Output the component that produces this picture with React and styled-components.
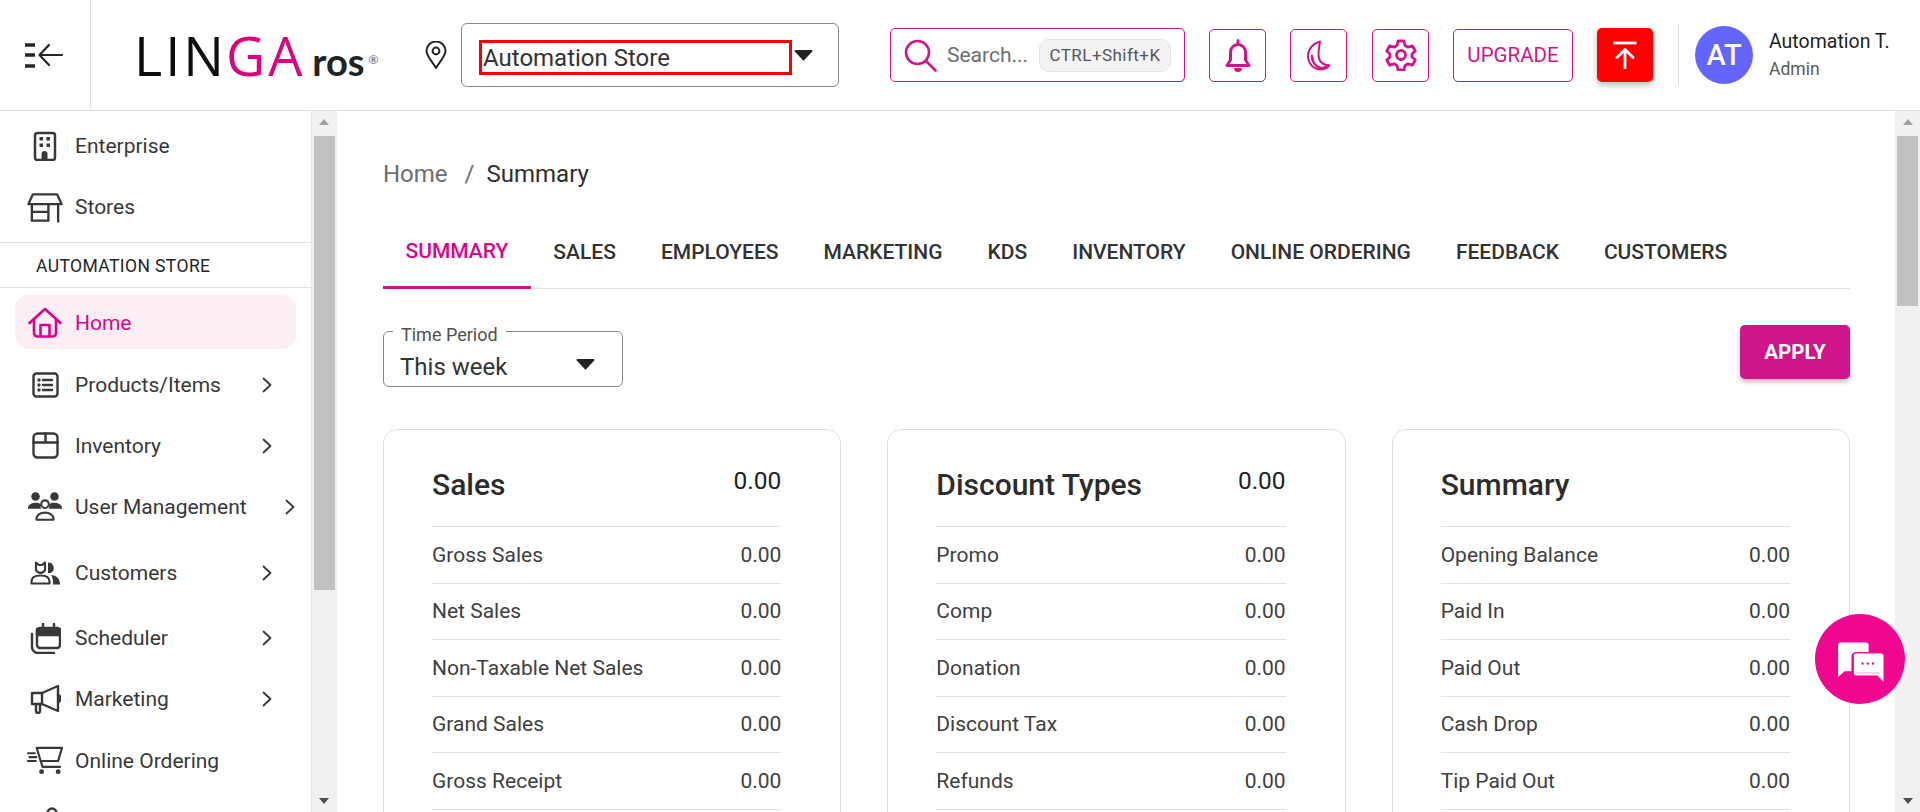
import React from "react";
import styled, { createGlobalStyle } from "styled-components";

const PINK = "#d0158a";
const INK = "#262626";

const Global = createGlobalStyle`
  html, body { margin: 0; padding: 0; height: 100%; overflow: hidden; background: #fff; }
  body { font-family: Roboto, "Liberation Sans", sans-serif; color: ${INK}; }
  * { box-sizing: border-box; }
`;

const Page = styled.div`
  width: 1920px; height: 812px; display: flex; flex-direction: column; overflow: hidden; position: relative;
`;
const Header = styled.header`
  height: 111px; flex: none; display: flex; align-items: center; border-bottom: 1px solid #e0e0e0; background: #fff;
`;
const MenuCell = styled.div`
  width: 91px; height: 110px; flex: none; border-right: 1px solid #e3e3e3; display: flex; align-items: center; padding-left: 22px;
`;
const Logo = styled.div`
  width: 323px; flex: none; padding-left: 43px; display: flex; align-items: baseline; height: 56px; color: #0d0d0d;
`;
const LogoWord = styled.span`
  font-size: 54px; letter-spacing: 3px; line-height: 56px; font-family: "Open Sans", sans-serif; font-weight: 400;
`;
const LogoAccent = styled.span`
  color: #d9047f; margin-left: -1px;
`;
const LogoRos = styled.span`
  font-family: Lato, sans-serif; font-size: 38px; font-weight: 700; margin-left: 7px; line-height: 56px; color: #222; white-space: nowrap;
`;
const LogoMark = styled.sup`
  font-size: 12px; font-weight: 400; margin-left: 4px; color: #555; vertical-align: 12px; line-height: 0;
`;
const PinSlot = styled.div`
  width: 47px; flex: none; display: flex; padding-left: 11px;
`;
const StoreSelect = styled.div`
  width: 378px; height: 64px; flex: none; border: 1px solid #85868b; border-radius: 6px; padding: 16px 0 0 17px; display: flex; align-items: flex-start;
`;
const StoreValue = styled.div`
  width: 313px; height: 35px; border: 3.5px solid #f80000; font-size: 24px; line-height: 30px; padding-left: 1px; color: #333; flex: none;
`;
const Caret = styled.svg`
  flex: none; margin: ${(p) => p.$m || 0};
`;
const SearchBox = styled.div`
  width: 295px; height: 54px; margin-left: 51px; flex: none; border: 1px solid ${PINK}; border-radius: 5px; display: flex; align-items: center; padding-left: 13px; color: #6d6d6d; font-size: 21px;
`;
const SearchText = styled.span`
  margin-left: 10px; width: 92px; flex: none;
`;
const Kbd = styled.span`
  width: 132px; height: 33px; flex: none; border-radius: 10px; background: #f3f3f3; border: 1px solid #e2e2e2; font-size: 17px; font-weight: 400; color: #555; display: flex; align-items: center; justify-content: center; letter-spacing: .45px; white-space: nowrap;
`;
const IconButton = styled.div`
  width: ${(p) => p.$w || 57}px; height: 53px; flex: none; margin-left: ${(p) => p.$ml || 24}px; border: 1px solid ${PINK}; border-radius: 5px; display: flex; align-items: center; justify-content: center; color: ${PINK}; font-size: 20.5px; font-weight: 400;
`;
const RedButton = styled.div`
  width: 56px; height: 54px; margin-left: 24px; flex: none; background: #fe0000; border-radius: 5px; display: flex; align-items: center; justify-content: center; box-shadow: 0 3px 6px rgba(0,0,0,.28);
`;
const VRule = styled.div`
  width: 1px; height: 60px; background: #dcdcdc; margin-left: 25px; flex: none;
`;
const Avatar = styled.div`
  width: 58px; height: 58px; border-radius: 50%; margin-left: 16px; flex: none; background: #6464ff; color: #fff; font-size: 29px; font-weight: 500; display: flex; align-items: center; justify-content: center;
`;
const UserInfo = styled.div`
  margin-left: 16px; display: flex; flex-direction: column; gap: 6px; white-space: nowrap;
`;
const UserName = styled.div`
  font-size: 19.5px; line-height: 22px; font-weight: 400; color: #1f1f1f;
`;
const UserRole = styled.div`
  font-size: 17.5px; line-height: 20px; color: #5a5a5a;
`;

const Body = styled.div`
  flex: 1; min-height: 0; display: flex;
`;
const Sidebar = styled.aside`
  width: 337px; flex: none; display: flex;
`;
const Nav = styled.nav`
  width: 312px; flex: none; border-right: 1px solid #e6e6e6; overflow: hidden; display: flex; flex-direction: column;
`;
const NavItem = styled.div`
  height: ${(p) => p.$h}px; flex: none; margin: ${(p) => p.$mt || 0}px ${(p) => (p.$wide ? -8 : 15)}px 0 15px; padding: 0 24px 0 12px; display: flex; align-items: center; font-size: 21px;
  color: ${(p) => (p.$active ? "#d9048e" : "#383838")};
  background: ${(p) => (p.$active ? "#fbeef5" : "transparent")};
  border-radius: 14px;
`;
const IconSlot = styled.span`
  width: 36px; margin-right: 12px; flex: none; display: flex; justify-content: center; align-items: center;
`;
const NavLabel = styled.span`
  flex: 1; white-space: nowrap; padding-top: ${(p) => (p.$active ? 1 : 0)}px;
`;
const Section = styled.div`
  height: 46px; flex: none; margin-top: 5px; padding: 1px 0 0 36px; border-top: 1px solid #e1e1e1; border-bottom: 1px solid #e1e1e1; display: flex; align-items: center; font-size: 17.5px; font-weight: 400; color: #262626; letter-spacing: .4px; white-space: nowrap;
`;
const Track = styled.div`
  width: ${(p) => p.$w}px; flex: none; background: #f1f1f1; display: flex; flex-direction: column; align-items: center; padding: 8px ${(p) => p.$pr || 0}px 8px 0;
`;
const Thumb = styled.div`
  width: ${(p) => p.$w}px; height: ${(p) => p.$h}px; background: #c1c1c1; margin-top: 11px; flex: none;
`;
const TrackSpacer = styled.div`
  flex: 1;
`;
const Arrow = styled.div`
  width: 0; height: 0; border-left: 5.5px solid transparent; border-right: 5.5px solid transparent;
  ${(p) => (p.$up ? "border-bottom: 6px solid #a3a3a3;" : "border-top: 6px solid #505050;")}
`;

const Main = styled.main`
  flex: 1; min-width: 0; overflow: hidden; padding: 47px 45px 0 46px;
`;
const Breadcrumb = styled.div`
  font-size: 24px; line-height: 32px; display: flex; color: #6e6e6e;
`;
const Crumb = styled.span`
  color: ${(p) => (p.$current ? "#2f2f2f" : "inherit")};
`;
const CrumbSeparator = styled.span`
  margin: 0 12px 0 17px;
`;
const Tabs = styled.div`
  display: flex; margin-top: 29px; height: 70px; border-bottom: 1px solid #e0e0e0;
`;
const Tab = styled.div`
  padding: 0 22.5px 4px; height: 70px; display: flex; align-items: center; font-size: 21px; font-weight: 500; white-space: nowrap;
  color: ${(p) => (p.$active ? "#d9048e" : "#333")};
  border-bottom: ${(p) => (p.$active ? `3.5px solid ${PINK}` : "none")};
`;
const FilterBar = styled.div`
  display: flex; justify-content: space-between; margin-top: 36px; height: 62px;
`;
const PeriodField = styled.div`
  margin-top: 6px; width: 240px; height: 56px; border: 1px solid #85868b; border-radius: 6px; position: relative; display: flex; align-items: center; padding: 16px 27px 0 16px; font-size: 24px; color: #333; justify-content: space-between;
`;
const PeriodLabel = styled.span`
  position: absolute; left: 9px; top: -7px; background: #fff; padding: 0 8px; font-size: 18px; line-height: 20px; color: #505050;
`;
const ApplyButton = styled.div`
  width: 110px; height: 54px; background: ${PINK}; color: #fff; border-radius: 5px; display: flex; align-items: center; justify-content: center; font-size: 20.5px; font-weight: 700; box-shadow: 0 3px 5px rgba(0,0,0,.25);
`;
const Cards = styled.div`
  display: grid; grid-template-columns: repeat(3, 1fr); gap: 46px; margin-top: 42px;
`;
const Card = styled.section`
  height: 640px; border: 1px solid #dedede; border-radius: 14px; padding: 0 59px 0 48px;
`;
const CardHead = styled.div`
  height: 96px; display: flex; justify-content: space-between; align-items: center; padding-top: 13px;
`;
const CardTitle = styled.h2`
  margin: 0; font-size: 30px; font-weight: 500; color: #2c2c2c;
`;
const CardTotal = styled.span`
  font-size: 24.5px; font-weight: 400; margin-top: -9px; color: #222;
`;
const Row = styled.div`
  height: 56.5px; display: flex; justify-content: space-between; align-items: center; border-top: 1px solid #e2e2e6; font-size: 21px; color: #404040;
  &:last-child { border-bottom: 1px solid #e2e2e6; height: 57.5px; }
`;
const ChatBubble = styled.div`
  position: absolute; left: 1815px; top: 614px; width: 90px; height: 90px; border-radius: 50%; background: #f1078f; display: flex; align-items: center; justify-content: center; padding: 7px 0 0 2px;
`;

const Ic = ({ w, h, children, sw = 2.4, fill = "none", color = "currentColor" }) => (
  <svg width={w} height={h} viewBox={`0 0 ${w} ${h}`} fill={fill} stroke={color} strokeWidth={sw} strokeLinecap="round" strokeLinejoin="round">{children}</svg>
);

const CaretDown = ({ w = 19, h = 12, m }) => (
  <Caret width={w} height={h} viewBox="0 0 19 12" $m={m}><path d="M1.5 1h16a1 1 0 0 1 .8 1.6L10.3 11a1 1 0 0 1-1.6 0L.7 2.6A1 1 0 0 1 1.5 1z" fill="#222" /></Caret>
);
const MenuIcon = () => (
  <Ic w={42} h={26} sw={2.6}>
    <path d="M3 3h10M3 13h10M3 24h10" strokeWidth="3.4" strokeLinecap="butt" />
    <path d="M40 13H18M27 3 17.5 13 27 23" strokeWidth="2.2" />
  </Ic>
);
const Pin = () => (
  <Ic w={22} h={28} sw={2}><path d="M11 27C7 20 1.5 15 1.5 10a9.5 9.5 0 0 1 19 0c0 5-5.500 10-9.500 17z" /><circle cx="11" cy="10" r="3.400" /></Ic>
);
const Enterprise = () => (
  <Ic w={24} h={30} sw={2.500}>
    <rect x="2" y="2" width="20" height="27" rx="2.500" />
    <g fill="currentColor" stroke="none"><rect x="6.500" y="6" width="3.500" height="3.500" /><rect x="13.500" y="6" width="3.500" height="3.500" /><rect x="6.500" y="12.500" width="3.500" height="3.500" /><rect x="13.500" y="12.500" width="3.500" height="3.500" /><path d="M8.500 29v-6a3 3 0 0 1 6 0v6z" /></g>
  </Ic>
);
const StoreIcon = () => (
  <Ic w={37} h={31}>
    <path d="M6 2h25l4.500 10H1.500z" />
    <path d="M5 12v17h17V12M5 20h17M32 12v18" />
  </Ic>
);
const HomeIcon = () => (
  <Ic w={34} h={31} sw={2.600}>
    <path d="M1.500 16 17 2l15.500 14" />
    <path d="M6 12v14a3.500 3.500 0 0 0 3.500 3.500h15a3.500 3.500 0 0 0 3.500-3.500V12" />
    <path d="M12.500 29V18h9v11" />
  </Ic>
);
const Products = () => (
  <Ic w={27} h={26}>
    <rect x="1.500" y="1.500" width="24" height="23" rx="3" />
    <path d="M11 8h9M11 13h9M11 18h9" />
    <g fill="currentColor" stroke="none"><circle cx="7" cy="8" r="1.700" /><circle cx="7" cy="13" r="1.700" /><circle cx="7" cy="18" r="1.700" /></g>
  </Ic>
);
const BoxIcon = () => (
  <Ic w={27} h={27}>
    <rect x="1.500" y="1.500" width="24" height="24" rx="4" />
    <path d="M1.500 10.500h24M13.500 1.500v9" />
  </Ic>
);
const UsersIcon = () => (
  <Ic w={38} h={31} sw={2.200}>
    <g fill="currentColor" stroke="none">
      <circle cx="9" cy="5" r="4.500" /><circle cx="29" cy="5" r="4.500" />
      <path d="M1 18c0-4 3-6.500 8-6.500 2.500 0 4 .5 5.500 1.500a8 8 0 0 0 .5 5H2a1 1 0 0 1-1-0zM37 18c0-4-3-6.500-8-6.500-2.500 0-4 .5-5.500 1.500a8 8 0 0 1-.5 5h13a1 1 0 0 0 1-0z" />
    </g>
    <circle cx="19" cy="13" r="4" />
    <path d="M10 29.500v-1c0-4 4-6.500 9-6.500s9 2.500 9 6.500v1z" />
  </Ic>
);
const CustomersIcon = () => (
  <Ic w={31} h={24} sw={2.200}>
    <path d="M6 1.500 9 4h3l3-2.500V9a5 5 0 0 1-9 0z" />
    <path d="M1.500 22.500v-2c0-4 3-6 9-6s9 2 9 6v2z" />
    <path d="M18 1.500a5.500 5.500 0 0 1 2.500 10.500H18zM21 14c5 .500 9 3 9 9.500h-7c0-3.500 0-7-2-9.500z" fill="currentColor" stroke="none" />
  </Ic>
);
const SchedulerIcon = () => (
  <Ic w={31} h={31} sw={2.400}>
    <rect x="7" y="5" width="23" height="20" rx="3" />
    <path d="M7 6h23v6H7z" fill="currentColor" />
    <path d="M13 1v4M24 1v4" />
    <path d="M2 11v13a6 6 0 0 0 6 6h16" />
  </Ic>
);
const MegaphoneIcon = () => (
  <Ic w={31} h={30} sw={2.400}>
    <path d="M2 9h10L28 2v25l-16-7H2z" />
    <path d="M12 9v11M6 20v7a2 2 0 0 0 4 0v-7" />
    <path d="M28 11c2 .500 2.500 1.500 2.500 3.500s-.500 3-2.500 3.500" fill="currentColor" />
  </Ic>
);
const CartIcon = () => (
  <Ic w={37} h={29} sw={2.200}>
    <path d="M11 1.500h25L32 15H14L10 1.500M14 15l2 6h18" />
    <path d="M1 7h7M2.500 11h7M1 15h8" />
    <g fill="currentColor" stroke="none"><circle cx="15" cy="26" r="2.500" /><circle cx="32" cy="26" r="2.500" /></g>
  </Ic>
);
const ToolsIcon = () => (
  <Ic w={30} h={30} sw={2.400}>
    <circle cx="22" cy="7" r="4.500" /><path d="M19 11 6 26" />
  </Ic>
);
const Chevron = () => (
  <Ic w={10} h={16} sw={1.800}><path d="M1.500 1.500 8.500 8l-7 6.500" /></Ic>
);
const SearchIcon = () => (
  <Ic w={33} h={33} sw={2.600} color={PINK}><circle cx="13.500" cy="13.500" r="11.500" /><path d="m22 22 9.500 9.500" /></Ic>
);
const Bell = () => (
  <Ic w={28} h={33} sw={3}>
    <path d="M14 1.500v3M6.500 21V13a7.500 7.500 0 0 1 15 0v8l3.500 5.500H3z" />
    <path d="M10 29h8a4 4 0 0 1-8 0z" fill="currentColor" stroke="none" />
  </Ic>
);
const Moon = () => (
  <Ic w={25} h={31} sw={2}>
    <path d="M14 1.500C7 3.500 2 9 2 16s5.500 13.500 12.500 13.500c3.500 0 7-1.500 9-4-7-.500-11-4.500-11-11 0-5 1-9.500 1.500-13z" />
    <path d="M6 16c0 5 3 10 8 12 3 .5 6-.5 8-2.500" strokeWidth="2.600" />
  </Ic>
);
const Gear = () => (
  <Ic w={32} h={32} sw={2.800}>
    <circle cx="16" cy="16" r="4.500" />
    <path d="M13 2h6l1 4.500 3 1.700 4.300-1.400 3 5.200-3.300 3v3l3.300 3-3 5.200-4.300-1.400-3 1.700-1 4.500h-6l-1-4.500-3-1.700-4.300 1.400-3-5.200 3.300-3v-3l-3.300-3 3-5.200 4.300 1.400 3-1.700z" />
  </Ic>
);
const UploadIcon = () => (
  <Ic w={26} h={28} sw={2.800} color="#fff"><path d="M1.500 2h23" strokeLinecap="butt" /><path d="M13 27V9M5 16.500l8-8 8 8" /></Ic>
);
const ChatIcon = () => (
  <svg width="46" height="41" viewBox="0 0 48 42">
    <path d="M3 0h26a3 3 0 0 1 3 3v7H19a5 5 0 0 0-5 5v15H7l-7 6V3a3 3 0 0 1 3-3z" fill="#fff" />
    <path d="M19 11h26a3 3 0 0 1 3 3v28l-7-7H19a3 3 0 0 1-3-3V14a3 3 0 0 1 3-3z" fill="#fff" stroke="#f1078f" strokeWidth="1" />
    <path d="M18.500 32h24" stroke="#f7a3d2" strokeWidth="1" fill="none" />
    <g fill="#f1078f"><rect x="24.500" y="21" width="2.200" height="2.200" /><rect x="30" y="21" width="2.200" height="2.200" /><rect x="35.500" y="21" width="2.200" height="2.200" /></g>
  </svg>
);

const navItems = [
  { label: "Products/Items", icon: <Products />, h: 61, more: true },
  { label: "Inventory", icon: <BoxIcon />, h: 61, more: true },
  { label: "User Management", icon: <UsersIcon />, h: 61, more: true, wide: true },
  { label: "Customers", icon: <CustomersIcon />, h: 72, more: true },
  { label: "Scheduler", icon: <SchedulerIcon />, h: 58, more: true },
  { label: "Marketing", icon: <MegaphoneIcon />, h: 64, more: true },
  { label: "Online Ordering", icon: <CartIcon />, h: 59 },
  { icon: <ToolsIcon />, h: 61 },
];

const tabs = ["SUMMARY", "SALES", "EMPLOYEES", "MARKETING", "KDS", "INVENTORY", "ONLINE ORDERING", "FEEDBACK", "CUSTOMERS"];

const cards = [
  { title: "Sales", total: "0.00", rows: ["Gross Sales", "Net Sales", "Non-Taxable Net Sales", "Grand Sales", "Gross Receipt"] },
  { title: "Discount Types", total: "0.00", rows: ["Promo", "Comp", "Donation", "Discount Tax", "Refunds"] },
  { title: "Summary", rows: ["Opening Balance", "Paid In", "Paid Out", "Cash Drop", "Tip Paid Out"] },
];

export default function App() {
  return (
    <Page>
      <Global />
      <Header>
        <MenuCell><MenuIcon /></MenuCell>
        <Logo>
          <LogoWord>LIN<LogoAccent>GA</LogoAccent></LogoWord>
          <LogoRos>ros<LogoMark>®</LogoMark></LogoRos>
        </Logo>
        <PinSlot><Pin /></PinSlot>
        <StoreSelect>
          <StoreValue>Automation Store</StoreValue>
          <CaretDown m="9px 0 0 2px" />
        </StoreSelect>
        <SearchBox>
          <SearchIcon />
          <SearchText>Search...</SearchText>
          <Kbd>CTRL+Shift+K</Kbd>
        </SearchBox>
        <IconButton><Bell /></IconButton>
        <IconButton><Moon /></IconButton>
        <IconButton $ml={25}><Gear /></IconButton>
        <IconButton $w={120}>UPGRADE</IconButton>
        <RedButton><UploadIcon /></RedButton>
        <VRule />
        <Avatar>AT</Avatar>
        <UserInfo>
          <UserName>Automation T.</UserName>
          <UserRole>Admin</UserRole>
        </UserInfo>
      </Header>
      <Body>
        <Sidebar>
          <Nav>
            <NavItem $h={62} $mt={4}><IconSlot><Enterprise /></IconSlot><NavLabel>Enterprise</NavLabel></NavItem>
            <NavItem $h={60}><IconSlot><StoreIcon /></IconSlot><NavLabel>Stores</NavLabel></NavItem>
            <Section>AUTOMATION STORE</Section>
            <NavItem $h={54} $mt={7} $active><IconSlot><HomeIcon /></IconSlot><NavLabel $active>Home</NavLabel></NavItem>
            {navItems.map((item, i) => (
              <NavItem key={i} $h={item.h} $wide={item.wide} $mt={i === 0 ? 5 : 0}>
                <IconSlot>{item.icon}</IconSlot>
                {item.label && <NavLabel>{item.label}</NavLabel>}
                {item.more && <Chevron />}
              </NavItem>
            ))}
          </Nav>
          <Track $w={25} $pr={1}>
            <Arrow $up />
            <Thumb $w={21} $h={454} />
            <TrackSpacer />
            <Arrow />
          </Track>
        </Sidebar>
        <Main>
          <Breadcrumb><Crumb>Home</Crumb><CrumbSeparator>/</CrumbSeparator><Crumb $current>Summary</Crumb></Breadcrumb>
          <Tabs>
            {tabs.map((t, i) => <Tab key={t} $active={i === 0}>{t}</Tab>)}
          </Tabs>
          <FilterBar>
            <PeriodField>
              <PeriodLabel>Time Period</PeriodLabel>
              This week
              <CaretDown w={19} h={12} m="-6px 0 0 0" />
            </PeriodField>
            <ApplyButton>APPLY</ApplyButton>
          </FilterBar>
          <Cards>
            {cards.map((c) => (
              <Card key={c.title}>
                <CardHead>
                  <CardTitle>{c.title}</CardTitle>
                  {c.total && <CardTotal>{c.total}</CardTotal>}
                </CardHead>
                {c.rows.map((r) => <Row key={r}><span>{r}</span><span>0.00</span></Row>)}
              </Card>
            ))}
          </Cards>
        </Main>
        <Track $w={25}>
          <Arrow $up />
          <Thumb $w={21} $h={170} />
          <TrackSpacer />
          <Arrow />
        </Track>
      </Body>
      <ChatBubble><ChatIcon /></ChatBubble>
    </Page>
  );
}
